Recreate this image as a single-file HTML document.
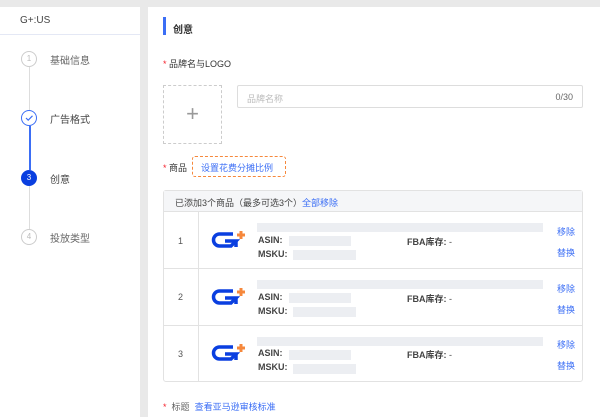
<!DOCTYPE html>
<html><head><meta charset="utf-8"><style>
*{margin:0;padding:0;box-sizing:border-box}
body{width:600px;height:417px;background:#e9e9e9;font-family:"Liberation Sans","Noto Sans CJK SC",sans-serif;font-size:9px;color:#333;position:relative;overflow:hidden}
.a{position:absolute}
.blue{color:#3b6ef5}
.st{position:absolute;left:21px;width:16px;height:16px;border-radius:50%;font-size:8px;text-align:center;line-height:14px}
.lbl{position:absolute;left:50px;font-size:10px;color:#666}
.bar{position:absolute;background:#eceef2}
.red{color:#f5222d}
</style></head><body>
<div class="a" style="left:0;top:7px;width:140px;height:410px;background:#fff"></div>
<div class="a" style="left:148px;top:7px;width:452px;height:410px;background:#fff"></div>
<div class="a" style="left:20px;top:15px;font-size:10px;color:#444">G+:US</div>
<div class="a" style="left:0;top:34px;width:140px;height:1px;background:#e4e8f5"></div>
<div class="a" style="left:29px;top:67px;width:1px;height:43px;background:#ddd"></div>
<div class="a" style="left:29px;top:126px;width:1.5px;height:44px;background:#3b6ef5"></div>
<div class="a" style="left:29px;top:186px;width:1px;height:43px;background:#ddd"></div>
<div class="st" style="top:51px;border:1px solid #ccc;color:#bbb">1</div>
<div class="st" style="top:110px;border:1px solid #3b6ef5"><svg width="14" height="14" viewBox="0 0 14 14" style="margin-top:0"><path d="M4 7l2.2 2.2L10.5 4.8" fill="none" stroke="#3b6ef5" stroke-width="1.2"/></svg></div>
<div class="st" style="top:170px;background:#0a3fe0;color:#fff;line-height:16px">3</div>
<div class="st" style="top:229px;border:1px solid #ccc;color:#bbb">4</div>
<div class="lbl" style="top:52px">基础信息</div>
<div class="lbl" style="top:111px;color:#444">广告格式</div>
<div class="lbl" style="top:171px;color:#444">创意</div>
<div class="lbl" style="top:230px">投放类型</div>

<div class="a" style="left:163px;top:17px;width:2.5px;height:18px;background:#3b6ef5"></div>
<div class="a" style="left:173px;top:21px;font-size:10px;font-weight:bold;color:#333">创意</div>
<div class="a" style="left:163px;top:57px;font-size:9px"><span class="red">*</span> 品牌名与LOGO</div>
<div class="a" style="left:163px;top:85px;width:59px;height:59px;border:1px dashed #ccc;text-align:center;line-height:56px;font-size:22px;color:#999;font-weight:200">+</div>
<div class="a" style="left:237px;top:85px;width:346px;height:23px;border:1px solid #ddd;border-radius:2px"><span class="a" style="left:9px;top:6px;color:#bbb">品牌名称</span><span class="a" style="right:9px;top:6px;color:#666">0/30</span></div>
<div class="a" style="left:163px;top:161px"><span class="red">*</span> 商品</div>
<div class="a" style="left:192px;top:156px;width:94px;height:21px;border:1.5px dashed #f6883c;border-radius:3px;padding:4px 0 0 8px" ><span class="blue">设置花费分摊比例</span></div>

<div class="a" style="left:163px;top:190px;width:420px;height:192px;border:1px solid #e2e2e2;border-radius:3px"></div>
<div class="a" style="left:164px;top:191px;width:418px;height:21px;background:#f5f6f8;border-bottom:1px solid #e2e2e2"></div>
<div class="a" style="left:175px;top:196px;color:#444">已添加3个商品（最多可选3个）<span class="blue">全部移除</span></div>
<div class="a" style="left:198px;top:212px;width:1px;height:169px;background:#e2e2e2"></div>
<div class="a" style="left:164px;top:268px;width:418px;height:1px;background:#e2e2e2"></div>
<div class="a" style="left:164px;top:325px;width:418px;height:1px;background:#e2e2e2"></div>

<div id="rows"></div>
<script></script>
<!-- row 1 -->
<div class="a" style="left:178px;top:236px;color:#555">1</div>
<svg class="a" style="left:211px;top:230px" width="36" height="18" viewBox="0 0 36 18"><path d="M22 4H8.5A6 6 0 0 0 8.5 16H20L25 11H14" fill="none" stroke="#0a3fe0" stroke-width="3.5"/><path d="M25 10v7" stroke="#0a3fe0" stroke-width="3.5"/><path d="M30 1v8M26 5h8" stroke="#f6883c" stroke-width="3"/></svg>
<div class="bar" style="left:257px;top:223px;width:286px;height:9px"></div>
<div class="a" style="left:258px;top:235px;font-weight:bold;color:#444">ASIN:</div><div class="bar" style="left:289px;top:236px;width:62px;height:10px"></div>
<div class="a" style="left:407px;top:235px;font-weight:bold;color:#444">FBA库存: <span style="font-weight:normal">-</span></div>
<div class="a" style="left:258px;top:249px;font-weight:bold;color:#444">MSKU:</div><div class="bar" style="left:293px;top:250px;width:63px;height:10px"></div>
<div class="a blue" style="left:557px;top:225px">移除</div><div class="a blue" style="left:557px;top:246px">替换</div>
<!-- row 2 -->
<div class="a" style="left:178px;top:292px;color:#555">2</div>
<svg class="a" style="left:211px;top:287px" width="36" height="18" viewBox="0 0 36 18"><path d="M22 4H8.5A6 6 0 0 0 8.5 16H20L25 11H14" fill="none" stroke="#0a3fe0" stroke-width="3.5"/><path d="M25 10v7" stroke="#0a3fe0" stroke-width="3.5"/><path d="M30 1v8M26 5h8" stroke="#f6883c" stroke-width="3"/></svg>
<div class="bar" style="left:257px;top:280px;width:286px;height:9px"></div>
<div class="a" style="left:258px;top:292px;font-weight:bold;color:#444">ASIN:</div><div class="bar" style="left:289px;top:293px;width:62px;height:10px"></div>
<div class="a" style="left:407px;top:292px;font-weight:bold;color:#444">FBA库存: <span style="font-weight:normal">-</span></div>
<div class="a" style="left:258px;top:306px;font-weight:bold;color:#444">MSKU:</div><div class="bar" style="left:293px;top:307px;width:63px;height:10px"></div>
<div class="a blue" style="left:557px;top:282px">移除</div><div class="a blue" style="left:557px;top:303px">替换</div>
<!-- row 3 -->
<div class="a" style="left:178px;top:349px;color:#555">3</div>
<svg class="a" style="left:211px;top:343px" width="36" height="18" viewBox="0 0 36 18"><path d="M22 4H8.5A6 6 0 0 0 8.5 16H20L25 11H14" fill="none" stroke="#0a3fe0" stroke-width="3.5"/><path d="M25 10v7" stroke="#0a3fe0" stroke-width="3.5"/><path d="M30 1v8M26 5h8" stroke="#f6883c" stroke-width="3"/></svg>
<div class="bar" style="left:257px;top:337px;width:286px;height:9px"></div>
<div class="a" style="left:258px;top:348px;font-weight:bold;color:#444">ASIN:</div><div class="bar" style="left:289px;top:350px;width:62px;height:10px"></div>
<div class="a" style="left:407px;top:348px;font-weight:bold;color:#444">FBA库存: <span style="font-weight:normal">-</span></div>
<div class="a" style="left:258px;top:362px;font-weight:bold;color:#444">MSKU:</div><div class="bar" style="left:293px;top:364px;width:63px;height:10px"></div>
<div class="a blue" style="left:557px;top:338px">移除</div><div class="a blue" style="left:557px;top:359px">替换</div>

<div class="a" style="left:163px;top:400px"><span class="red">*</span>&nbsp; <span style="color:#666">标题</span>&nbsp; <span class="blue">查看亚马逊审核标准</span></div>
</body></html>
